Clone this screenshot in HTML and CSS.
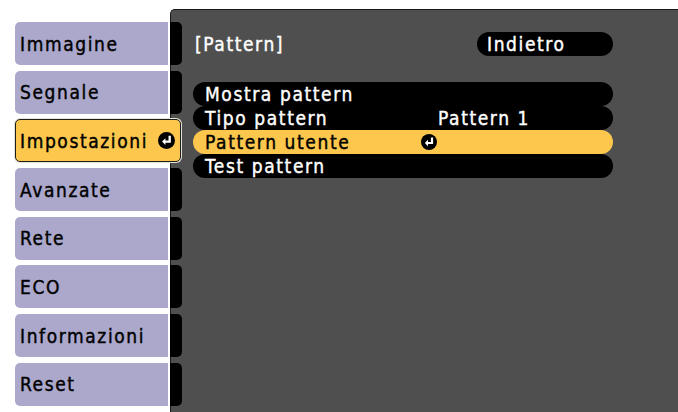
FILE: index.html
```html
<!DOCTYPE html>
<html lang="it">
<head>
    <meta charset="UTF-8">
    <meta name="viewport" content="width=device-width, initial-scale=1.0">
    <title>Impostazioni - Pattern</title>
    <link rel="stylesheet" href="styles.css">
</head>
<body>
    <div class="screen">
        <ul class="tabs">
            <li class="tab">Immagine</li>
            <li class="tab">Segnale</li>
            <li class="tab active">
                Impostazioni
                <svg class="enter" viewBox="0 0 16 16" width="17" height="17">
                    <circle cx="8" cy="8" r="8" fill="#000"/>
                    <path d="M11 3.5 V9 H5.5" fill="none" stroke="#fff" stroke-width="2.2"/>
                    <path d="M7 5.8 L3.8 9 L7 12.2 Z" fill="#fff"/>
                </svg>
            </li>
            <li class="tab">Avanzate</li>
            <li class="tab">Rete</li>
            <li class="tab">ECO</li>
            <li class="tab">Informazioni</li>
            <li class="tab">Reset</li>
        </ul>

        <div class="panel">
            <div class="content">
                <div class="header">
                    <span class="title">[Pattern]</span>
                    <span class="back">Indietro</span>
                </div>

                <ul class="rows">
                    <li class="row"><span class="label">Mostra pattern</span></li>
                    <li class="row">
                        <span class="label">Tipo pattern</span>
                        <span class="value text">Pattern 1</span>
                    </li>
                    <li class="row active">
                        <span class="label">Pattern utente</span>
                        <span class="value">
                            <svg class="enter" viewBox="0 0 16 16" width="16" height="16">
                                <circle cx="8" cy="8" r="8" fill="#000"/>
                                <path d="M11 3.5 V9 H5.5" fill="none" stroke="#fff" stroke-width="2.2"/>
                                <path d="M7 5.8 L3.8 9 L7 12.2 Z" fill="#fff"/>
                            </svg>
                        </span>
                    </li>
                    <li class="row"><span class="label">Test pattern</span></li>
                </ul>
            </div>
        </div>
    </div>
</body>
</html>
```

FILE: styles.css
```css
body {
    margin: 0;
    background-color: #fff;
    font-family: "DejaVu Sans Condensed", "DejaVu Sans", sans-serif;
    font-size: 19px;
    letter-spacing: 1.6px;
    -webkit-text-stroke: 0.4px currentColor;
}
ul {
    list-style: none;
    margin: 0;
    padding: 0;
}
.screen {
    display: flex;
    height: 412px;
    overflow: hidden;
}

/* left menu */
.tabs {
    position: relative;
    z-index: 1;
    display: flex;
    flex-direction: column;
    gap: 5.7px;
    padding: 22px 0 0 15px;
    margin-right: -12px;
}
.tab {
    display: flex;
    align-items: center;
    width: 167px;
    height: 43px;
    padding-left: 5px;
    box-sizing: border-box;
    border-radius: 5px;
    background: linear-gradient(to right, #aba8cb 153px, #fff 153px, #fff 155px, #000 155px);
    color: #000;
}
.tab.active {
    width: 166px;
    border: 1px solid #1c1c1c;
    padding-left: 4px;
    background: #fcc74c;
    box-shadow: 0 0 0 1px #e6e2d6;
}
.tab .enter {
    margin-left: auto;
    margin-right: 5px;
}

/* right panel */
.panel {
    flex: 1;
    margin-top: 9px;
    background-color: #4f4f4f;
    border-top: 1px solid #1a1a1a;
    border-left: 1px solid #1a1a1a;
    border-top-left-radius: 5px;
}
.content {
    width: 420px;
    padding: 22px 0 0 22px;
    color: #fff;
}
.header {
    display: flex;
    justify-content: space-between;
    align-items: center;
    height: 24px;
}
.title {
    padding-left: 2px;
}
.back {
    width: 136px;
    height: 24px;
    line-height: 24px;
    padding-left: 10px;
    box-sizing: border-box;
    border-radius: 12px;
    background-color: #000;
}
.rows {
    margin-top: 26px;
}
.row {
    display: flex;
    align-items: center;
    height: 24px;
    padding-left: 12px;
    border-radius: 12px;
    background-color: #000;
}
.row.active {
    background-color: #fcc74c;
    color: #000;
}
.label {
    width: 216px;
}
.value {
    display: flex;
    align-items: center;
}
.value.text {
    padding-left: 17px;
}
```
